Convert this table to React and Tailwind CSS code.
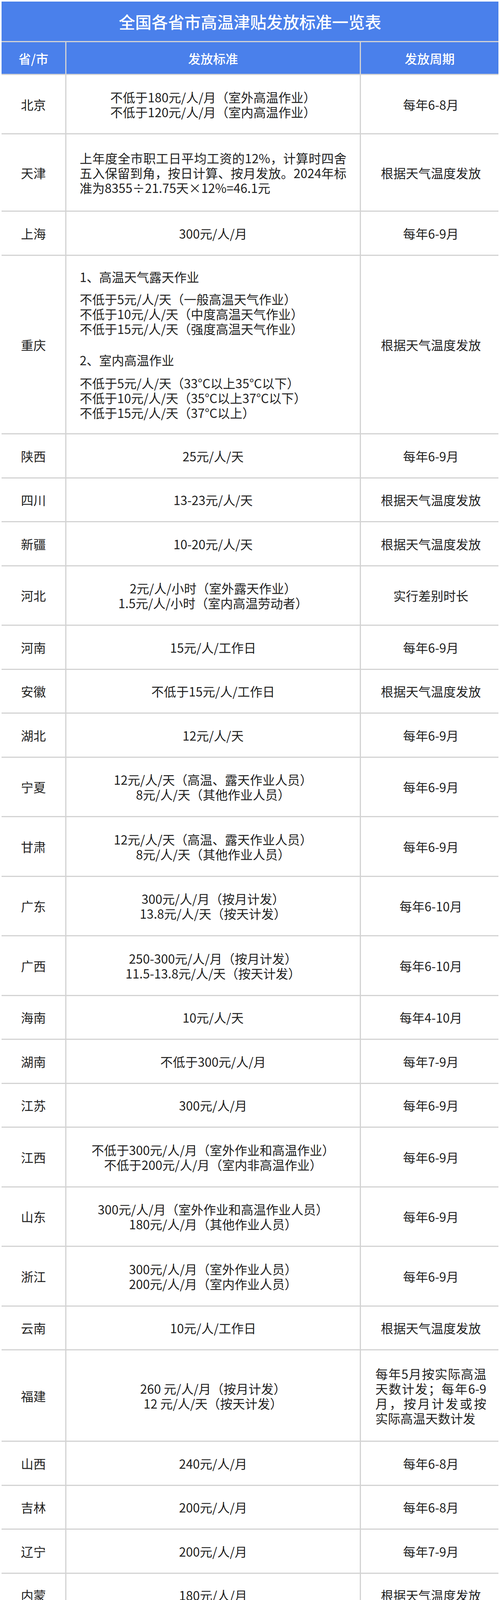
import React from "react";

const H1 = "h-[112.5px]";
const H2 = "h-[152.5px]";

const rows = [
  { p: "北京", s: ["不低于180元/人/月（室外高温作业）", "不低于120元/人/月（室内高温作业）"], c: "每年6-8月", h: "h-[152px]" },
  { p: "天津", kind: "tianjin", c: "根据天气温度发放", h: "h-[198px]" },
  { p: "上海", s: ["300元/人/月"], c: "每年6-9月", h: "h-[113px]" },
  { p: "重庆", kind: "chongqing", c: "根据天气温度发放", h: "h-[457px]" },
  { p: "陕西", s: ["25元/人/天"], c: "每年6-9月", h: H1 },
  { p: "四川", s: ["13-23元/人/天"], c: "根据天气温度发放", h: H1 },
  { p: "新疆", s: ["10-20元/人/天"], c: "根据天气温度发放", h: H1 },
  { p: "河北", s: ["2元/人/小时（室外露天作业）", "1.5元/人/小时（室内高温劳动者）"], c: "实行差别时长", h: H2 },
  { p: "河南", s: ["15元/人/工作日"], c: "每年6-9月", h: H1 },
  { p: "安徽", s: ["不低于15元/人/工作日"], c: "根据天气温度发放", h: H1 },
  { p: "湖北", s: ["12元/人/天"], c: "每年6-9月", h: H1 },
  { p: "宁夏", s: ["12元/人/天（高温、露天作业人员）", "8元/人/天（其他作业人员）"], c: "每年6-9月", h: H2 },
  { p: "甘肃", s: ["12元/人/天（高温、露天作业人员）", "8元/人/天（其他作业人员）"], c: "每年6-9月", h: H2 },
  { p: "广东", s: ["300元/人/月（按月计发）", "13.8元/人/天（按天计发）"], c: "每年6-10月", h: H2 },
  { p: "广西", s: ["250-300元/人/月（按月计发）", "11.5-13.8元/人/天（按天计发）"], c: "每年6-10月", h: H2 },
  { p: "海南", s: ["10元/人/天"], c: "每年4-10月", h: H1 },
  { p: "湖南", s: ["不低于300元/人/月"], c: "每年7-9月", h: H1 },
  { p: "江苏", s: ["300元/人/月"], c: "每年6-9月", h: H1 },
  { p: "江西", s: ["不低于300元/人/月（室外作业和高温作业）", "不低于200元/人/月（室内非高温作业）"], c: "每年6-9月", h: H2 },
  { p: "山东", s: ["300元/人/月（室外作业和高温作业人员）", "180元/人/月（其他作业人员）"], c: "每年6-9月", h: H2 },
  { p: "浙江", s: ["300元/人/月（室外作业人员）", "200元/人/月（室内作业人员）"], c: "每年6-9月", h: H2 },
  { p: "云南", s: ["10元/人/工作日"], c: "根据天气温度发放", h: H1 },
  { p: "福建", s: ["260 元/人/月（按月计发）", "12 元/人/天（按天计发）"], kind: "fujian", h: "h-[234px]" },
  { p: "山西", s: ["240元/人/月"], c: "每年6-8月", h: H1 },
  { p: "吉林", s: ["200元/人/月"], c: "每年6-8月", h: H1 },
  { p: "辽宁", s: ["200元/人/月"], c: "每年7-9月", h: H1 },
  { p: "内蒙", s: ["180元/人/月"], c: "根据天气温度发放", h: H1 },
  { p: "贵州", s: ["8元/人/天；168元/人/月", "非全日制用工的劳动者1元/人/小时"], c: "每年6-9月", h: H2 },
  { p: "黑龙江", s: ["政策无明确规定"], c: "政策无明确规定", h: H1 },
  { p: "青海", s: ["政策无明确规定"], c: "政策无明确规定", h: "h-[112px]" },
];

// lines that should stretch edge to edge, like the justified cells in the picture
function JustLines({ lines }) {
  return (
    <div className="w-full text-left">
      {lines.map((l, i) => (
        <div
          key={i}
          className={i < lines.length - 1 ? "text-justify [text-align-last:justify]" : ""}
        >
          {l}
        </div>
      ))}
    </div>
  );
}

function Tianjin() {
  return (
    <JustLines
      lines={[
        "上年度全市职工日平均工资的12%，计算时四舍",
        "五入保留到角，按日计算、按月发放。2024年标",
        "准为8355÷21.75天×12%=46.1元",
      ]}
    />
  );
}

function Chongqing() {
  return (
    <div className="w-full text-left">
      <div>1、高温天气露天作业</div>
      <div className="mt-[19px]">
        <div>不低于5元/人/天（一般高温天气作业）</div>
        <div>不低于10元/人/天（中度高温天气作业）</div>
        <div>不低于15元/人/天（强度高温天气作业）</div>
      </div>
      <div className="mt-[42px]">2、室内高温作业</div>
      <div className="mt-[21px]">
        <div>不低于5元/人/天（33°C以上35°C以下）</div>
        <div>不低于10元/人/天（35°C以上37°C以下）</div>
        <div>不低于15元/人/天（37°C以上）</div>
      </div>
    </div>
  );
}

function Row({ r }) {
  return (
    <div className={`grid grid-cols-[163px_754px_1fr] border-t-[3px] border-[#d3d3d3] ${r.h}`}>
      <div className="flex items-center justify-center">{r.p}</div>
      <div className="flex items-center justify-center border-l-[3px] border-[#d3d3d3] px-[34px] text-center">
        {r.kind === "tianjin" ? (
          <Tianjin />
        ) : r.kind === "chongqing" ? (
          <Chongqing />
        ) : (
          <div>
            {r.s.map((l, i) => (
              <div key={i}>{l}</div>
            ))}
          </div>
        )}
      </div>
      <div className="flex items-center justify-center border-l-[3px] border-[#d3d3d3] pl-[37px] pr-[31px] text-center">
        {r.kind === "fujian" ? (
          <JustLines
            lines={["每年5月按实际高温", "天数计发；每年6-9", "月，按月计发或按", "实际高温天数计发"]}
          />
        ) : (
          <div>{r.c}</div>
        )}
      </div>
    </div>
  );
}

export default function App() {
  return (
    <div
      className="min-h-[4525px] bg-white px-1 pt-1 text-[32px] leading-[38px] text-[#1f1f1f]"
      style={{ fontFamily: '"Noto Sans CJK SC", "Noto Sans", sans-serif' }}
    >
      <div className="flex h-[101px] items-center justify-center bg-[#4a80eb] text-[42px] font-medium text-white">
        全国各省市高温津贴发放标准一览表
      </div>

      {/* header */}
      <div className="grid h-[84px] grid-cols-[163px_754px_1fr] border-t-[3px] border-[#d3d3d3] bg-[#4a80eb] font-medium text-white">
        <div className="flex items-center justify-center">省/市</div>
        <div className="flex items-center justify-center border-l-[3px] border-[#d3d3d3]">发放标准</div>
        <div className="flex items-center justify-center border-l-[3px] border-[#d3d3d3]">发放周期</div>
      </div>

      {rows.map((r) => (
        <Row key={r.p} r={r} />
      ))}
    </div>
  );
}
